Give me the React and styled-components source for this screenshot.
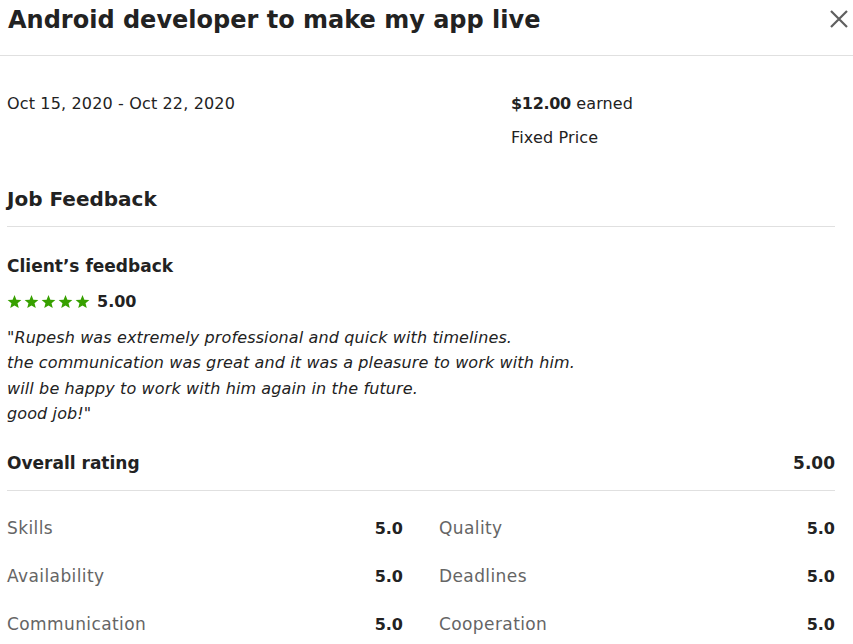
import React from 'react'
import styled, { createGlobalStyle } from 'styled-components'

const GlobalStyle = createGlobalStyle`
  html, body {
    margin: 0;
    padding: 0;
    background: #fff;
  }
  body {
    font-family: 'DejaVu Sans', 'Liberation Sans', sans-serif;
    color: #222;
  }
`

const ratings = [
  ['Skills', '5.0'],
  ['Quality', '5.0'],
  ['Availability', '5.0'],
  ['Deadlines', '5.0'],
  ['Communication', '5.0'],
  ['Cooperation', '5.0'],
]

function Star() {
  return (
    <svg width="15" height="14" viewBox="0 0 24 23">
      <path
        fill="#37a000"
        d="M12 0l3.1 7.6 8.2.6-6.3 5.3 2 8-7-4.4-7 4.4 2-8L.7 8.2l8.2-.6z"
      />
    </svg>
  )
}

function App() {
  return (
    <Modal>
      <GlobalStyle />
      <Header>
        <Title>Android developer to make my app live</Title>
        <Close aria-label="close">
          <svg width="18" height="18" viewBox="0 0 18 18">
            <path d="M1 1l16 16M17 1L1 17" stroke="#5f5f5f" strokeWidth="2.2" />
          </svg>
        </Close>
      </Header>
      <Body>
        <Summary>
          <Text>Oct 15, 2020 - Oct 22, 2020</Text>
          <Earned>
            <Text>
              <strong>$12.00</strong> earned
            </Text>
            <Text>Fixed Price</Text>
          </Earned>
        </Summary>
        <SectionTitle>Job Feedback</SectionTitle>
        <SubTitle>Client’s feedback</SubTitle>
        <Stars>
          <Star />
          <Star />
          <Star />
          <Star />
          <Star />
          <Score>5.00</Score>
        </Stars>
        <Quote>
          "Rupesh was extremely professional and quick with timelines.
          <br />
          the communication was great and it was a pleasure to work with him.
          <br />
          will be happy to work with him again in the future.
          <br />
          good job!"
        </Quote>
        <Overall>
          <span>Overall rating</span>
          <span>5.00</span>
        </Overall>
        <Grid>
          {ratings.map(([label, value]) => (
            <RatingRow key={label}>
              <Label>{label}</Label>
              <Value>{value}</Value>
            </RatingRow>
          ))}
        </Grid>
      </Body>
    </Modal>
  )
}

const Modal = styled.div`
  width: 853px;
  min-height: 644px;
  overflow: hidden;
`

const Header = styled.header`
  display: flex;
  align-items: center;
  justify-content: space-between;
  height: 56px;
  padding: 0 5px 16px 8px;
  box-sizing: border-box;
  border-bottom: 1px solid #e0e0e0;
`

const Title = styled.h1`
  margin: 0;
  font-size: 24px;
  font-weight: 700;
  color: #222;
  line-height: 38px;
`

const Close = styled.button`
  display: flex;
  border: 0;
  background: none;
  padding: 0;
  margin-top: -2px;
  cursor: pointer;
`

const Body = styled.div`
  padding: 35px 18px 0 7px;
`

const Summary = styled.div`
  display: grid;
  grid-template-columns: 504px 1fr;
`

const Earned = styled.div`
  display: flex;
  flex-direction: column;
  gap: 9px;
`

const Text = styled.div`
  font-size: 16px;
  line-height: 25px;
  letter-spacing: 0.15px;
  color: #222;

  strong {
    font-weight: 700;
    letter-spacing: -0.3px;
  }
`

const SectionTitle = styled.h2`
  margin: 36px 0 0;
  padding-bottom: 14px;
  border-bottom: 1px solid #e0e0e0;
  font-size: 20px;
  font-weight: 700;
  line-height: 26px;
`

const SubTitle = styled.h3`
  margin: 27px 0 0;
  font-size: 17px;
  font-weight: 700;
  line-height: 24px;
`

const Stars = styled.div`
  display: flex;
  align-items: center;
  gap: 2px;
  margin-top: 14px;
`

const Score = styled.span`
  margin-left: 5px;
  font-size: 16px;
  font-weight: 600;
`

const Quote = styled.p`
  margin: 14px 0 0;
  font-size: 16px;
  font-style: italic;
  line-height: 25.3px;
  letter-spacing: 0.12px;
  color: #222;
`

const Overall = styled.div`
  display: flex;
  justify-content: space-between;
  margin-top: 25px;
  padding-bottom: 15px;
  border-bottom: 1px solid #e0e0e0;
  font-size: 17px;
  font-weight: 700;
  line-height: 24px;
`

const Grid = styled.div`
  display: grid;
  grid-template-columns: 1fr 1fr;
  column-gap: 36px;
  row-gap: 24px;
  padding-top: 25px;
`

const RatingRow = styled.div`
  display: flex;
  justify-content: space-between;
  align-items: baseline;
  height: 24px;
  line-height: 24px;
`

const Label = styled.span`
  font-size: 17px;
  letter-spacing: 0.4px;
  color: #656565;
`

const Value = styled.span`
  font-size: 16px;
  font-weight: 700;
  color: #222;
`

export default App
